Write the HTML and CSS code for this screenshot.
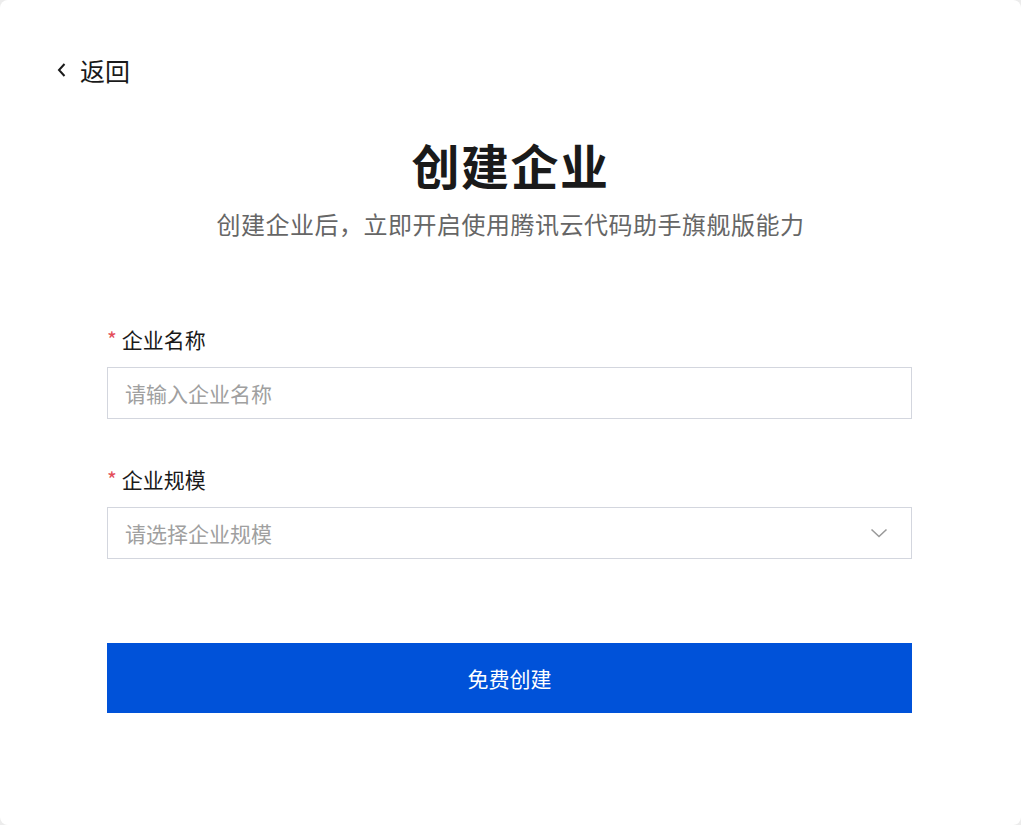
FILE: index.html
```html
<!DOCTYPE html>
<html lang="zh-CN">
<head>
    <meta charset="UTF-8">
    <meta name="viewport" content="width=device-width, initial-scale=1.0">
    <title>创建企业</title>
    <link rel="stylesheet" href="styles.css">
</head>
<body>
    <div class="card">
        <a class="back" href="#">
            <svg class="back-icon" width="10" height="16" viewBox="0 0 10 16"><path d="M8.5 2 L3 8 L8.5 14" fill="none" stroke="#1a1a1a" stroke-width="2"/></svg>
            <span>返回</span>
        </a>

        <h1 class="title">创建企业</h1>
        <p class="subtitle">创建企业后，立即开启使用腾讯云代码助手旗舰版能力</p>

        <form class="form">
            <label class="label"><span class="mandatory">*</span>企业名称</label>
            <input class="field" type="text" placeholder="请输入企业名称">

            <label class="label label-gap"><span class="mandatory">*</span>企业规模</label>
            <div class="field select">
                <span class="placeholder">请选择企业规模</span>
                <svg width="18" height="10" viewBox="0 0 18 10"><path d="M1.5 1.5 L9 8.5 L16.5 1.5" fill="none" stroke="#9a9a9a" stroke-width="1.6"/></svg>
            </div>

            <button class="submit" type="button">免费创建</button>
        </form>
    </div>
</body>
</html>
```

FILE: styles.css
```css
html, body {
    height: 100%;
}
body {
    margin: 0;
    background-color: #ececec;
    font-family: "Noto Sans CJK SC", "Noto Sans", sans-serif;
    color: #1a1a1a;
}
.card {
    box-sizing: border-box;
    height: 100%;
    background: #fff;
    border-radius: 8px;
    padding-top: 54px;
}
.back {
    display: flex;
    align-items: center;
    gap: 14px;
    margin-left: 56px;
    height: 32px;
    width: max-content;
    font-size: 25px;
    line-height: 32px;
    color: #1a1a1a;
    text-decoration: none;
}
.title {
    margin: 48px 0 0;
    text-align: center;
    font-size: 48px;
    line-height: 60px;
    font-weight: 700;
    letter-spacing: 1.5px;
}
.subtitle {
    margin: 14px 0 0;
    text-align: center;
    font-size: 24px;
    line-height: 32px;
    letter-spacing: 0.5px;
    color: #666;
}
.form {
    width: 805px;
    margin: 85px 0 0 107px;
    display: flex;
    flex-direction: column;
}
.label {
    font-size: 21px;
    line-height: 28px;
    margin-bottom: 14px;
}
.label-gap {
    margin-top: 46px;
}
.mandatory {
    color: #e34d59;
    margin-right: 5px;
}
.field {
    box-sizing: border-box;
    height: 52px;
    border: 1px solid #d3d6de;
    padding: 0 17px;
    font-family: inherit;
    font-size: 21px;
    color: #1a1a1a;
    outline: none;
}
.field::placeholder,
.placeholder {
    color: #a0a0a0;
}
.select {
    display: flex;
    align-items: center;
    justify-content: space-between;
    padding-right: 23px;
}
.submit {
    margin-top: 84px;
    height: 70px;
    border: none;
    background-color: #0052d9;
    color: #fff;
    font-family: inherit;
    font-size: 21px;
    cursor: pointer;
}
```
